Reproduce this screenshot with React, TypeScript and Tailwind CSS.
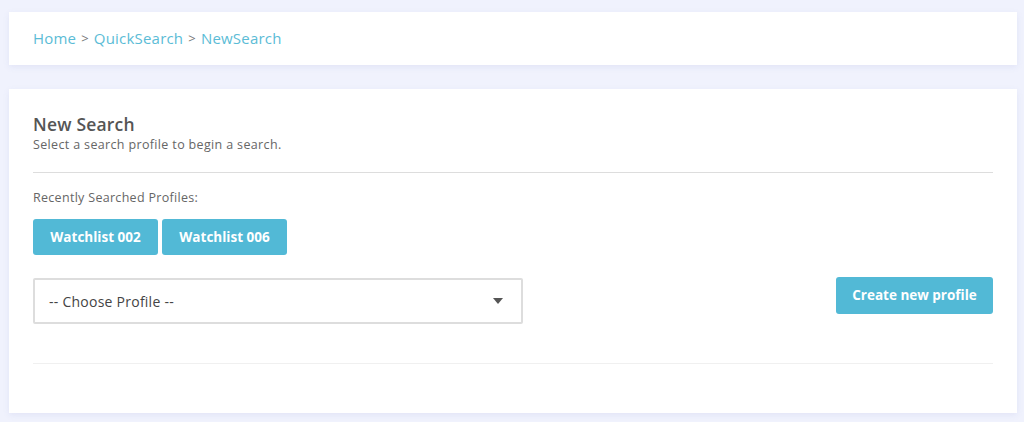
import React, { useState } from 'react'

const font = { fontFamily: '"Open Sans", "Noto Sans", sans-serif' }

export default function App() {
  const [profile, setProfile] = useState<string>('')
  const recent = ['Watchlist 002', 'Watchlist 006']

  return (
    <div className="min-h-[422px] w-[1024px] bg-[#f0f2fd] pt-[12px]" style={font}>
      {/* Breadcrumb */}
      <section className="ml-[9px] w-[1008px] h-[53px] bg-white shadow-[0_2px_6px_rgba(120,130,200,0.12)] flex items-center px-6">
        <div className="flex items-center text-[15px] tracking-[0.2px] text-[#5bbcd6]">
          <span>Home</span>
          <span className="mx-[5px] text-[#777] text-[13px]">&gt;</span>
          <span>QuickSearch</span>
          <span className="mx-[5px] text-[#777] text-[13px]">&gt;</span>
          <span>NewSearch</span>
        </div>
      </section>

      {/* New Search card */}
      <section className="ml-[9px] mt-[24px] w-[1008px] h-[324px] bg-white shadow-[0_2px_6px_rgba(120,130,200,0.12)] px-6 pt-[23px]">
        <div className="text-[17.5px] font-semibold leading-[24px] tracking-[0.2px] text-[#555]">New Search</div>
        <div className="mt-[1px] text-[12.5px] leading-[16px] tracking-[0.35px] text-[#666]">Select a search profile to begin a search.</div>
        <div className="mt-[19px] border-t border-[#ddd]" />
        <div className="mt-[17px] text-[12.5px] leading-[16px] tracking-[0.3px] text-[#666]">Recently Searched Profiles:</div>
        <div className="mt-[13px] flex gap-[4px]">
          {recent.map((r) => (
            <button
              key={r}
              type="button"
              className="h-[36px] w-[125px] rounded-[3px] bg-[#52b9d6] text-[13.5px] font-bold text-white"
            >
              {r}
            </button>
          ))}
        </div>
        <div className="mt-[23px] flex items-start justify-between">
          <div className="relative w-[490px] h-[46px] border-2 border-[#ddd] rounded-[2px] flex items-center pl-[14px] pr-[18px]">
            <select
              value={profile}
              onChange={(e) => setProfile(e.target.value)}
              className="absolute inset-0 opacity-0"
            >
              <option value="">-- Choose Profile --</option>
              {recent.map((r) => <option key={r} value={r}>{r}</option>)}
            </select>
            <span className="flex-1 text-[14px] tracking-[0.25px] text-[#444]">{profile || '-- Choose Profile --'}</span>
            <svg width="10" height="6" viewBox="0 0 10 6"><path d="M0 0h10L5 6z" fill="#555" /></svg>
          </div>
          <button
            type="button"
            className="mt-[-1px] h-[37px] w-[157px] rounded-[3px] bg-[#52b9d6] text-[13.5px] font-bold text-white"
          >
            Create new profile
          </button>
        </div>
        <div className="mt-[39px] border-t border-[#f0f0f0]" />
      </section>
    </div>
  )
}
